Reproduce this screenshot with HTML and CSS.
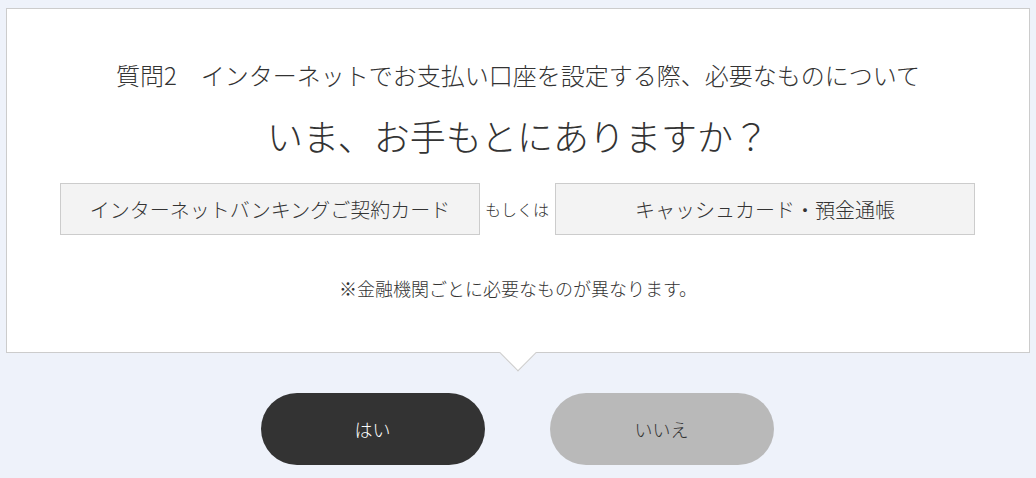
FILE: index.html
```html
<!DOCTYPE html>
<html lang="ja">
<head>
<meta charset="utf-8">
<title>質問2</title>
<link rel="stylesheet" href="styles.css">
</head>
<body>
<div class="page">
  <section class="panel">
    <p class="q-lead">質問2　インターネットでお支払い口座を設定する際、必要なものについて</p>
    <h1 class="q-main">いま、お手もとにありますか？</h1>
    <div class="items">
      <div class="item">インターネットバンキングご契約カード</div>
      <span class="or">もしくは</span>
      <div class="item">キャッシュカード・預金通帳</div>
    </div>
    <p class="note">※金融機関ごとに必要なものが異なります。</p>
    <span class="arrow"></span>
  </section>
  <div class="answers">
    <button class="btn btn-yes">はい</button>
    <button class="btn btn-no">いいえ</button>
  </div>
</div>
</body>
</html>
```

FILE: styles.css
```css
* { box-sizing: border-box; }
html, body {
  margin: 0;
  padding: 0;
  background: #eef2fa;
}
body {
  font-family: "Noto Sans CJK JP", "Noto Sans", sans-serif;
  font-weight: 300;
  color: #333;
}
.page {
  padding: 8px 6px 0;
  height: 478px;
}
.panel {
  position: relative;
  background: #fff;
  border: 1px solid #cccccc;
  padding: 48px 0 50px;
  text-align: center;
}
.q-lead {
  margin: 0;
  font-size: 24px;
  line-height: 36px;
  font-weight: 300;
}
.q-main {
  margin: 15px 0 0;
  font-size: 36px;
  line-height: 54px;
  font-weight: 300;
}
.items {
  margin-top: 21px;
  display: flex;
  justify-content: center;
  align-items: center;
  padding-right: 1px;
}
.item {
  flex: 0 0 420px;
  height: 52px;
  background: #f3f3f3;
  border: 1px solid #cccccc;
  font-size: 20px;
  display: flex;
  align-items: center;
  justify-content: center;
}
.or {
  flex: 0 0 64px;
  white-space: nowrap;
  font-size: 16px;
  margin: 0 6px 0 5px;
  text-align: center;
}
.note {
  margin: 40px 0 0;
  font-size: 18px;
  line-height: 27px;
}
.arrow {
  position: absolute;
  left: 50%;
  bottom: -14px;
  width: 26px;
  height: 26px;
  margin-left: -13px;
  background: #fff;
  border-right: 1px solid #cccccc;
  border-bottom: 1px solid #cccccc;
  transform: rotate(45deg);
}
.answers {
  margin-top: 40px;
  display: flex;
  justify-content: center;
  gap: 65px;
  padding-right: 2px;
}
.btn {
  width: 224px;
  height: 72px;
  border: none;
  border-radius: 36px;
  font-family: inherit;
  font-weight: 300;
  font-size: 18px;
}
.btn-yes {
  background: #333333;
  color: #fff;
}
.btn-no {
  background: #b9b9b9;
  color: #333;
}
```
